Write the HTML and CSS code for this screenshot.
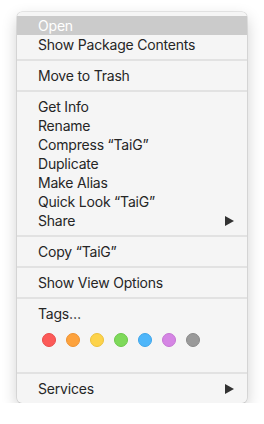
FILE: index.html
```html
<!DOCTYPE html>
<html>
<head>
<meta charset="utf-8">
<link rel="stylesheet" href="styles.css">
</head>
<body>
<div class="menu">
  <div class="item active">Open</div>
  <div class="item">Show Package Contents</div>
  <div class="sep"></div>
  <div class="item">Move to Trash</div>
  <div class="sep"></div>
  <div class="item">Get Info</div>
  <div class="item">Rename</div>
  <div class="item">Compress “TaiG”</div>
  <div class="item">Duplicate</div>
  <div class="item">Make Alias</div>
  <div class="item">Quick Look “TaiG”</div>
  <div class="item sub">Share<span class="arrow"></span></div>
  <div class="sep"></div>
  <div class="item">Copy “TaiG”</div>
  <div class="sep"></div>
  <div class="item">Show View Options</div>
  <div class="sep"></div>
  <div class="item">Tags…</div>
  <div class="tags">
    <span class="dot red"></span>
    <span class="dot orange"></span>
    <span class="dot yellow"></span>
    <span class="dot green"></span>
    <span class="dot blue"></span>
    <span class="dot purple"></span>
    <span class="dot gray"></span>
  </div>
  <div class="sep"></div>
  <div class="item sub">Services<span class="arrow"></span></div>
</div>
</body>
</html>
```
FILE: styles.css
```css
html, body {
  margin: 0;
  padding: 0;
  background: #ffffff;
}
body {
  padding: 12px 17px 0 17px;
  font-family: Inter, "Noto Sans", sans-serif;
}
.menu {
  width: 230px;
  box-sizing: border-box;
  background: #f5f5f5;
  border-radius: 5px;
  padding: 4px 0 5px 0;
  box-shadow: 0 0 0 0.5px rgba(0,0,0,0.16), 0 6px 16px rgba(0,0,0,0.2);
  color: #262626;
  font-size: 14px;
  letter-spacing: -0.2px;
}
.item {
  height: 19px;
  line-height: 19px;
  padding: 0 13px 0 21px;
  display: flex;
  justify-content: space-between;
  align-items: center;
  white-space: nowrap;
}
.item.active {
  background: #cbcbcb;
  color: #ffffff;
}
.sep {
  height: 12px;
  display: flex;
  align-items: center;
}
.sep::after {
  content: "";
  display: block;
  width: 100%;
  height: 2px;
  background: #e2e2e2;
}
.arrow {
  width: 0;
  height: 0;
  border-top: 5.5px solid transparent;
  border-bottom: 5.5px solid transparent;
  border-left: 9px solid #333333;
}
.tags {
  height: 44px;
  display: flex;
  gap: 10px;
  padding: 10px 0 0 25px;
  box-sizing: border-box;
}
.dot {
  width: 14px;
  height: 14px;
  border-radius: 50%;
  box-sizing: border-box;
}
.red { background: #fc5a58; border: 1px solid #ea4b49; }
.orange { background: #fda23d; border: 1px solid #ee9231; }
.yellow { background: #fdd34a; border: 1px solid #ecc13c; }
.green { background: #7ed95a; border: 1px solid #6cc84a; }
.blue { background: #4eb6fa; border: 1px solid #3ea5ea; }
.purple { background: #d585e4; border: 1px solid #c575d4; }
.gray { background: #9a9a9a; border: 1px solid #8a8a8a; }
```
